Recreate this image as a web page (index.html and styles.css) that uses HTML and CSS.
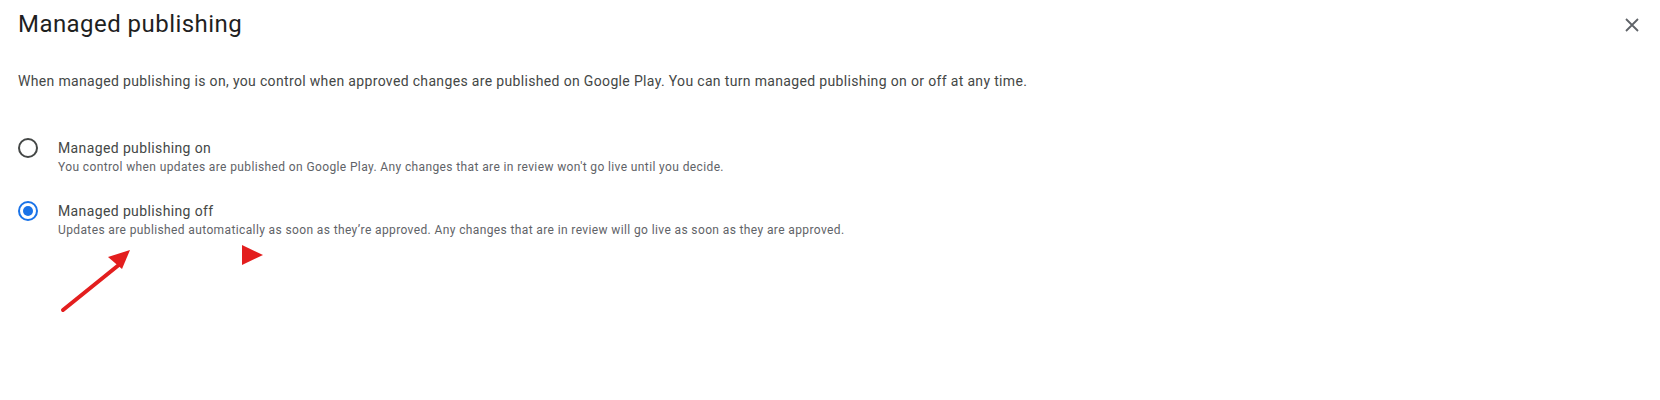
FILE: index.html
```html
<!DOCTYPE html>
<html lang="en">
<head>
<meta charset="utf-8">
<title>Managed publishing</title>
<link rel="stylesheet" href="styles.css">
</head>
<body>
<div class="dialog">
  <header class="dialog-header">
    <h1 class="dialog-title">Managed publishing</h1>
    <button class="close-btn" aria-label="Close">
      <svg width="14" height="14" viewBox="0 0 14 14"><path d="M1 1L13 13M13 1L1 13" stroke="#5f6368" stroke-width="1.8" fill="none"/></svg>
    </button>
  </header>
  <p class="dialog-desc">When managed publishing is on, you control when approved changes are published on Google Play. You can turn managed publishing on or off at any time.</p>
  <div class="options">
    <label class="option">
      <span class="radio"></span>
      <span class="option-text">
        <span class="option-label">Managed publishing on</span>
        <span class="option-sub">You control when updates are published on Google Play. Any changes that are in review won't go live until you decide.</span>
      </span>
    </label>
    <label class="option">
      <span class="radio checked"></span>
      <span class="option-text">
        <span class="option-label">Managed publishing off</span>
        <span class="option-sub">Updates are published automatically as soon as they’re approved. Any changes that are in review will go live as soon as they are approved.</span>
      </span>
    </label>
  </div>
  <svg class="annotations" width="1660" height="400" viewBox="0 0 1660 400">
    <line x1="63" y1="310" x2="120" y2="264" stroke="#e31e1e" stroke-width="4" stroke-linecap="round"/>
    <polygon points="130,250 108,257 122,269" fill="#e31e1e"/>
    <polygon points="242,245 242,265 263,255" fill="#e31e1e"/>
  </svg>
</div>
</body>
</html>
```
FILE: styles.css
```css
html, body {
  margin: 0;
  padding: 0;
  background: #ffffff;
}
body {
  font-family: Roboto, "Liberation Sans", Arial, sans-serif;
  width: 1660px;
  height: 400px;
  overflow: hidden;
}
.dialog {
  position: relative;
  height: 400px;
  padding: 8px 16px 0 18px;
  box-sizing: border-box;
}
.dialog-header {
  display: flex;
  align-items: center;
  justify-content: space-between;
}
.dialog-title {
  margin: 0;
  font-size: 24px;
  line-height: 32px;
  font-weight: 400;
  color: #1f1f1f;
  letter-spacing: 0.45px;
}
.close-btn {
  width: 24px;
  height: 24px;
  padding: 0;
  border: 0;
  background: none;
  display: flex;
  align-items: center;
  justify-content: center;
  margin-top: 2px;
}
.dialog-desc {
  margin: 31px 0 0;
  font-size: 14px;
  line-height: 20px;
  color: #444746;
  letter-spacing: 0.34px;
}
.options {
  margin-top: 47px;
  display: flex;
  flex-direction: column;
  gap: 25px;
}
.option {
  display: flex;
  align-items: flex-start;
  gap: 20px;
}
.radio {
  width: 20px;
  height: 20px;
  box-sizing: border-box;
  border: 2px solid #444746;
  border-radius: 50%;
  flex: none;
  position: relative;
}
.radio.checked {
  border-color: #1a73e8;
}
.radio.checked::after {
  content: "";
  position: absolute;
  left: 3px;
  top: 3px;
  width: 10px;
  height: 10px;
  border-radius: 50%;
  background: #1a73e8;
}
.option-text {
  display: flex;
  flex-direction: column;
}
.option-label {
  font-size: 14px;
  line-height: 20px;
  color: #444746;
  letter-spacing: 0.38px;
}
.option-sub {
  font-size: 12px;
  line-height: 18px;
  color: #5f6368;
  letter-spacing: 0.38px;
}
.annotations {
  position: absolute;
  left: 0;
  top: 0;
  pointer-events: none;
}
```
